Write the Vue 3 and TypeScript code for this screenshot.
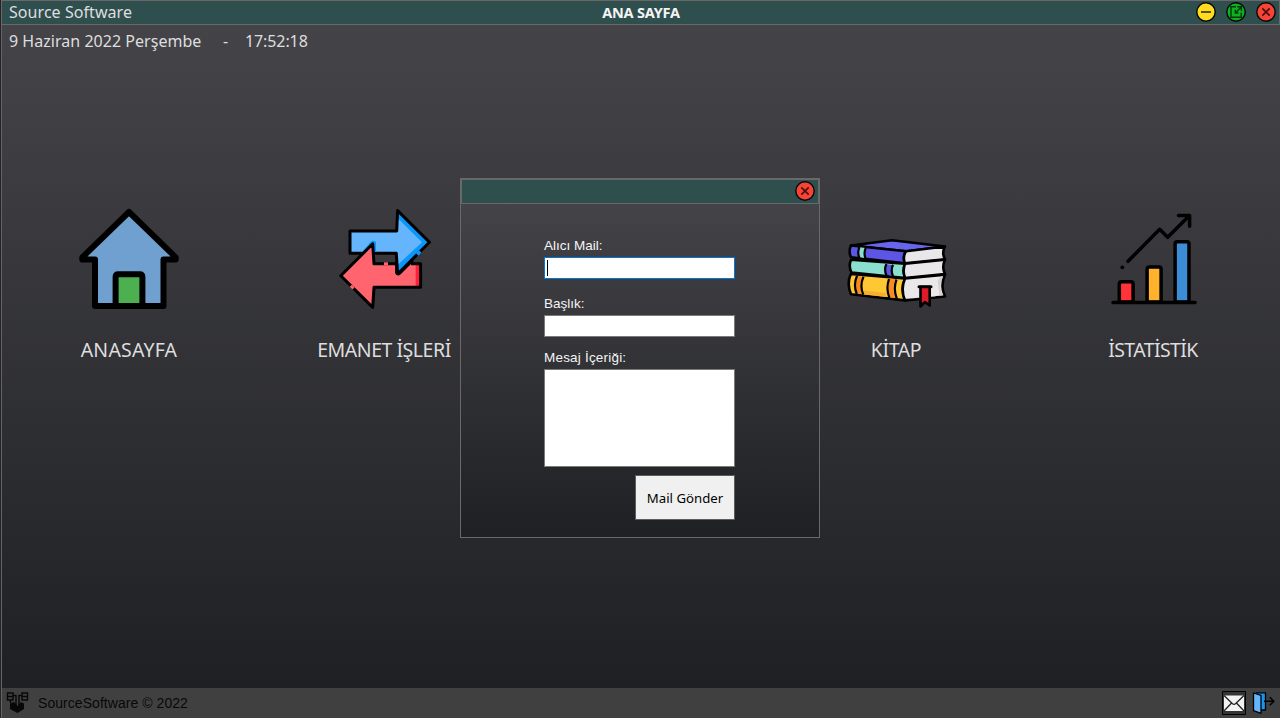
<script setup lang="ts">
import { ref } from 'vue'

const recipient = ref('')
const subject = ref('')
const message = ref('')
</script>

<template>
  <div class="window">
    <header class="titlebar">
      <span class="brand">Source Software</span>
      <span class="title">ANA SAYFA</span>
      <div class="controls">
        <svg viewBox="0 0 20 20"><circle cx="10" cy="10" r="9.2" fill="#ffdc1e" stroke="#080808" stroke-width="1.4" /><path d="M5 10H15" stroke="#4a400c" stroke-width="1.8" /></svg>
        <svg viewBox="0 0 20 20"><circle cx="10" cy="10" r="9.2" fill="#0db222" stroke="#080808" stroke-width="1.4" /><path d="M10 4.8H5V15.3H15.2V10.5M11.2 4.8H15.4V9M15 5.2L9.3 11M9.3 7.8V11H12.5" fill="none" stroke="#06370b" stroke-width="1.4" /></svg>
        <svg viewBox="0 0 20 20"><circle cx="10" cy="10" r="9.2" fill="#f74437" stroke="#080808" stroke-width="1.4" /><path d="M6.3 6.3L13.7 13.7M13.7 6.3L6.3 13.7" stroke="#4a100c" stroke-width="1.7" /></svg>
      </div>
    </header>

    <div class="clock">
      <span class="date">9 Haziran 2022 Perşembe</span>
      <span class="dash">-</span>
      <span class="time">17:52:18</span>
    </div>

    <nav class="menu">
      <div class="item">
        <svg viewBox="77 207 104 104">
          <path d="M129 212L82.3 257.3V259.5H95V306H163.5V259.5H175.7V257.3Z" fill="#70a0cf" stroke="#000" stroke-width="6" stroke-linejoin="round" />
          <path d="M115.6 306V277Q115.6 274.3 118.3 274.3H139.7Q142.4 274.3 142.4 277V306Z" fill="#4caf50" stroke="#000" stroke-width="6" stroke-linejoin="round" />
        </svg>
        <span class="label home">ANASAYFA</span>
      </div>
      <div class="item">
        <svg viewBox="332 207 104 104">
          <path d="M350 231H396.7L397.6 210.6L429.4 242.3L397.6 274L396.3 253.3H350Z" fill="#64b5fb" />
          <path d="M397.6 210.6L429.4 242.3L397.6 274V265L422 242.3L397.6 218Z" fill="#0a96fb" />
          <path d="M364 252L372.5 243.5L376 245V253H364Z" fill="#0a96fb" />
          <path d="M350 231H396.7L397.6 210.6L429.4 242.3L397.6 274L396.3 253.3H350Z" fill="none" stroke="#000" stroke-width="3" stroke-linejoin="round" />
          <path d="M362 252L371 241.5Q373.5 239.8 376 242V252Z" fill="#0a96fb" />
          <path d="M340.8 275.7L372.7 243.8L374 263.8H396.5V272.5Q397.6 277 401.4 273.2L410.8 263.8H420.6V287.3H374L372.7 307.4Z" fill="#ff646f" />
          <path d="M415.7 265H419.6V286H415.7Z" fill="#fd2038" />
          <path d="M411 263.8H420.6V287.3H374L372.7 307.4L340.8 275.7L372.7 243.8L374 263.8H396" fill="none" stroke="#000" stroke-width="3" stroke-linejoin="round" />
          <path d="M396.4 261V273Q397.6 275.5 400 273L413 260" fill="none" stroke="#000" stroke-width="2.6" />
          <path d="M384 263.8H388" stroke="#ff646f" stroke-width="3" />
          <path d="M350.8 285.7L353.5 288.4" stroke="#ff646f" stroke-width="3" />
          <path d="M417.2 254.5L420.2 251.5" stroke="#0a96fb" stroke-width="3.4" />
        </svg>
        <span class="label loans">EMANET İŞLERİ</span>
      </div>
      <div class="item"></div>
      <div class="item">
        <svg viewBox="844 207 104 104">
          <g stroke="#000" stroke-width="2.6" stroke-linejoin="round" stroke-linecap="round">
            <path d="M851 245.5L892 240.2L945 246.5L906 251.3Z" fill="#6765ee" />
            <path d="M851 245.5Q848.2 251 851 257.3L905 263.4Q902.3 257 906 251.3Z" fill="#5c55e5" />
            <path d="M906 251.3L945 246.5Q941.5 253 945 259.3L905 263.4Q902.3 257 906 251.3Z" fill="#e9e7e9" />
            <path d="M851 259.7Q848.2 266 851.5 272.5L905 278Q902.3 270.5 905 263.8Z" fill="#8adfcf" />
            <path d="M905 263.8L945 259.7Q941.5 267 945 274L905 278Q902.3 270.5 905 263.8Z" fill="#e9e7e9" />
            <path d="M850.8 274Q846.5 283.5 851 294.3L905 300.4Q900.2 289.5 905 278.5Z" fill="#fec834" />
            <path d="M905 278.5L945 274.7Q940 285.5 945 296.5L905 300.4Q900.2 289.5 905 278.5Z" fill="#ebe8ea" />
          </g>
          <path d="M910 298.2Q930 298 939.5 295.3L937.8 281L940 277.3L943 276Q938 287 942.3 295.2L907 298.6Z" fill="#d8cdd0" />
          <path d="M859.7 247.2Q857.4 252.5 859.7 257.3L865 258Q863 252.5 865.7 248Z" fill="#8adfcf" />
          <path d="M886.5 264.2Q884 269.5 886.4 275L892 275.5Q890.5 270 892.4 265Z" fill="#5c55e5" />
          <path d="M857 276Q853 285 856.8 293.6L862 294.2Q859 285 862.6 276.8ZM889.5 278.5Q886.7 288 890 297.4L895 298Q892 288 895 279Z" fill="#f78b20" />
          <path d="M864 290.5L886 293V297L864 294.5Z" fill="#f8af2d" />
          <path d="M859.5 247Q857 252.5 859.5 258M865.7 248Q863.5 253 865.5 258.5M886.4 264Q883.8 269.5 886.4 275.5M893 264.8Q890.4 270.5 893 276M857 275.7Q853 285 856.8 294M863.5 276.8Q859.5 285.5 863.2 294.5M889 279Q885.7 288.5 889.4 297.8M896.5 279.5Q893 289 896.8 298.5" stroke="#000" stroke-width="2.2" fill="none" />
          <path d="M919 286.8H931" stroke="#000" stroke-width="3" stroke-linecap="round" />
          <path d="M920.5 287V306.5L925 302L929.7 305.5V287Z" fill="#df1b29" stroke="#000" stroke-width="2.6" stroke-linejoin="round" />
        </svg>
        <span class="label books">KİTAP</span>
      </div>
      <div class="item">
        <svg viewBox="1100 207 104 104">
          <g stroke="#000" stroke-width="3.5" stroke-linejoin="round" stroke-linecap="round">
            <path d="M1119.3 302V284Q1119.3 281.7 1121.6 281.7H1130.8Q1133.1 281.7 1133.1 284V302Z" fill="#ff3338" />
            <path d="M1147.1 302V269.2Q1147.1 266.9 1149.4 266.9H1158.8Q1161.1 266.9 1161.1 269.2V302Z" fill="#ffb32d" />
            <path d="M1175.1 302V244Q1175.1 241.7 1177.4 241.7H1186.7Q1189 241.7 1189 244V302Z" fill="#3c8dd5" />
            <path d="M1113 302.4H1195" fill="none" />
            <path d="M1128 261.3L1159.7 229.3L1167.7 237.3L1189 216M1178.5 215.4H1189.6V226.3" fill="none" />
          </g>
          <circle cx="1122.3" cy="267.3" r="1.9" fill="#000" />
        </svg>
        <span class="label stats">İSTATİSTİK</span>
      </div>
    </nav>

    <footer class="statusbar">
      <svg class="logo" viewBox="6 691 24 24">
        <path d="M7.5 693H13V700H7.5ZM22 693H27.5V700H22ZM8 696.5H13M22 696.5H27M13 695.5H16V705M22 695.5H19V705M10.5 700V703" fill="none" stroke="#080808" stroke-width="1.4" />
        <path d="M10 703.5L14 702L17.5 706L21 702L24 703.5V709L17.5 713L10 709Z" fill="#080808" />
      </svg>
      <span class="copyright">SourceSoftware © 2022</span>
      <div class="tray">
        <svg class="mail" viewBox="0 0 24 24">
          <path d="M.5 .5H23.5V23.5H.5Z" fill="#343434" stroke="#000" />
          <path d="M2 4.5H22V20H2Z" fill="#f2f2f2" />
          <path d="M2 4.5L10.5 12.8Q12 14 13.5 12.8L22 4.5M2 20L9.3 12.2M22 20L14.7 12.2" fill="none" stroke="#222" stroke-width="1.3" />
        </svg>
        <svg class="exit" viewBox="0 0 24 24">
          <path d="M4 1.8H13.5V19H9" fill="#1a94f0" stroke="#000" stroke-width="1.3" stroke-linejoin="round" />
          <path d="M1.5 1.8L9 4.3V22.3L1.5 19.7Z" fill="#64b5f9" stroke="#000" stroke-width="1.3" stroke-linejoin="round" />
          <path d="M12 10.2H21.5M17.8 6.2L21.8 10.2L17.8 14.2" fill="none" stroke="#000" stroke-width="1.5" />
        </svg>
      </div>
    </footer>

    <section class="dialog" role="dialog">
      <div class="dialog-bar">
        <svg viewBox="0 0 20 20"><circle cx="10" cy="10" r="9.2" fill="#f74437" stroke="#080808" stroke-width="1.4" /><path d="M6.3 6.3L13.7 13.7M13.7 6.3L6.3 13.7" stroke="#4a100c" stroke-width="1.7" /></svg>
      </div>
      <form class="form" @submit.prevent>
        <label for="recipient" class="l-mail">Alıcı Mail:</label>
        <div class="active-field">
          <input id="recipient" v-model="recipient" class="field active" />
        </div>
        <label for="subject" class="l-subject">Başlık:</label>
        <input id="subject" v-model="subject" class="field" />
        <label for="message" class="l-message">Mesaj İçeriği:</label>
        <textarea id="message" v-model="message" class="field area"></textarea>
        <button type="submit"><span>Mail Gönder</span></button>
      </form>
    </section>
  </div>
</template>

<style>
html,
body {
  margin: 0;
  overflow: hidden;
}
</style>

<style scoped>
* {
  box-sizing: border-box;
}
svg {
  display: block;
  flex: none;
}
.window {
  position: relative;
  width: 1280px;
  height: 718px;
  display: flex;
  flex-direction: column;
  padding-left: 1px;
  background: #242428;
  font-family: 'Noto Sans', 'Open Sans', sans-serif;
  color: #dededf;
}
.window > * {
  border-left: 1px solid #646464;
}
.titlebar {
  height: 25px;
  flex: none;
  display: grid;
  grid-template-columns: 1fr auto 1fr;
  align-items: center;
  border: 1px solid #696969;
  background: #2f4f4f;
  padding: 0 3px 2px 7px;
}
.brand,
.clock {
  font-size: 16px;
  white-space: nowrap;
}
.brand {
  letter-spacing: 0.06px;
}
.title {
  margin-right: 3px;
  font-size: 14.5px;
  letter-spacing: -0.22px;
  font-weight: 700;
  color: #f4f4f4;
}
.controls {
  display: flex;
  justify-content: flex-end;
  gap: 10px;
}
.controls svg,
.dialog-bar svg {
  width: 20px;
  height: 20px;
}
.clock {
  height: 70px;
  flex: none;
  display: flex;
  align-items: flex-start;
  padding: 5px 0 0 7px;
  background: linear-gradient(#444448, #414145);
}
.date {
  width: 214px;
  letter-spacing: 0.03px;
}
.dash {
  width: 22px;
}
.time {
  letter-spacing: -0.1px;
}
.menu {
  flex: 1;
  display: grid;
  grid-template-columns: 254px repeat(4, 256px);
  padding-top: 112px;
  background: linear-gradient(#414145, #1f2024);
}
.item {
  display: flex;
  flex-direction: column;
  align-items: center;
}
.item svg {
  width: 104px;
  height: 104px;
}
.label {
  margin-top: 25px;
  font-size: 19.5px;
  line-height: 28px;
  white-space: nowrap;
}
.home {
  letter-spacing: 0.2px;
}
.loans {
  letter-spacing: -0.47px;
}
.books {
  letter-spacing: -0.4px;
}
.stats {
  padding-left: 2px;
  letter-spacing: -0.6px;
}
.statusbar {
  height: 30px;
  flex: none;
  display: flex;
  align-items: center;
  padding: 0 4px;
  background: #404040;
}
.logo {
  width: 24px;
  height: 24px;
}
.copyright {
  margin-left: 8px;
  font: 14px 'Liberation Sans', sans-serif;
  letter-spacing: 0.05px;
  color: #080808;
}
.tray {
  margin-left: auto;
  display: flex;
  gap: 6px;
}
.tray svg {
  width: 24px;
  height: 24px;
}
.dialog {
  position: absolute;
  left: 460px;
  top: 178px;
  width: 360px;
  height: 360px;
  border: 1px solid #696969;
  background: linear-gradient(#444448 25px, #1f2024);
}
.dialog-bar {
  height: 25px;
  display: flex;
  justify-content: flex-end;
  align-items: center;
  padding: 0 3px 1px 0;
  border: 1px solid #696969;
  background: #2f4f4f;
}
.form {
  width: 191px;
  margin-left: 83px;
  padding-top: 33px;
  display: flex;
  flex-direction: column;
}
label {
  height: 20px;
  font: 13.5px/18px 'Liberation Sans', sans-serif;
  color: #f4f4f4;
}
.field {
  display: block;
  width: 191px;
  height: 22px;
  margin: 0;
  padding: 1px 3px;
  border: 1px solid #7a7a7a;
  border-radius: 0;
  background: #fff;
  outline: none;
  resize: none;
}
.active-field {
  position: relative;
}
.active-field::after {
  content: '';
  position: absolute;
  left: 3px;
  top: 3px;
  width: 1px;
  height: 16px;
  background: #000;
}
.active {
  border-color: #0078d7;
}
.l-subject {
  margin-top: 16px;
}
.l-message {
  margin-top: 12px;
  letter-spacing: 0.2px;
}
.area {
  height: 98px;
}
button {
  align-self: flex-end;
  width: 100px;
  height: 45px;
  margin-top: 8px;
  padding: 0;
  border: 1px solid #5c5c5c;
  border-radius: 0;
  background: #f0f0f0;
  color: #000;
  font: 13.2px 'Noto Sans', sans-serif;
}
</style>
